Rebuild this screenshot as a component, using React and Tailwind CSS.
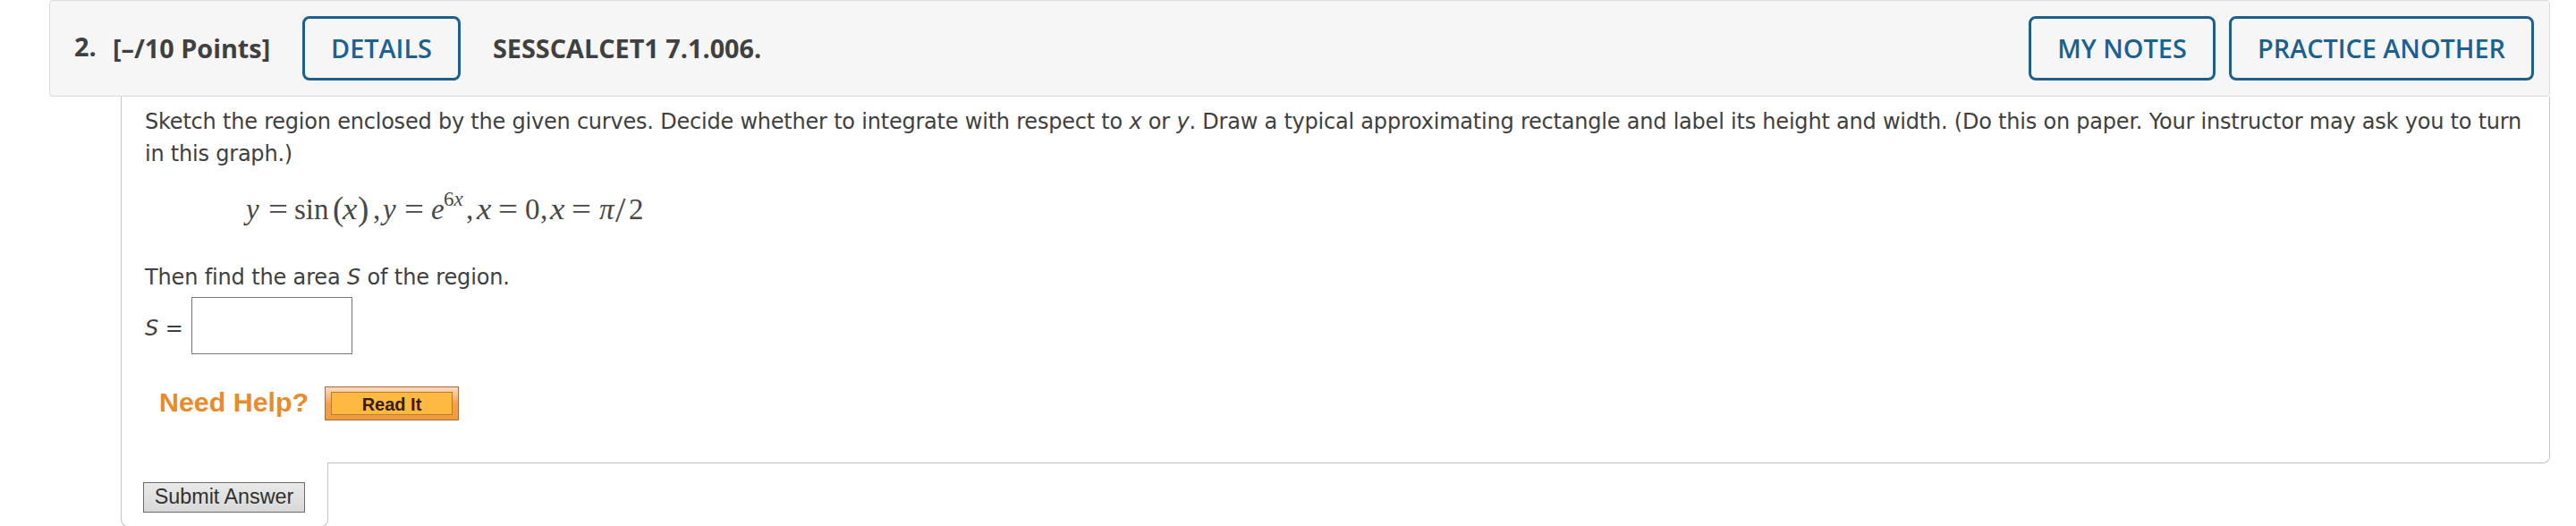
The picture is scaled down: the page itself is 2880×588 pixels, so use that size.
const headerButton =
  "h-[72px] shrink-0 rounded-[8px] border-[3px] border-[#1f5f8b] text-center text-[28.8px] font-semibold leading-[66px] text-[#1a6192]";

function Piece({ className, children }) {
  return <span className={`shrink-0 whitespace-nowrap ${className}`}>{children}</span>;
}

function Equals({ className }) {
  return (
    <Piece className={className}>
      <span className="inline-block origin-left scale-x-[1.18]">=</span>
    </Piece>
  );
}

function VarX({ className }) {
  return (
    <Piece className={className}>
      <span className="inline-block origin-left scale-x-[1.12] italic">x</span>
    </Piece>
  );
}

function Formula() {
  return (
    <div className="flex h-[44px] pl-[139px] font-['Liberation_Serif',serif] text-[33px] leading-[44px] text-[#484848]">
      <Piece className="w-[25px] italic">y</Piece>
      <Equals className="w-[29px]" />
      <Piece className="w-[43px]">sin</Piece>
      <Piece className="w-[11px] text-[37px]">(</Piece>
      <VarX className="w-[17px]" />
      <Piece className="w-[17px] text-[37px]">)</Piece>
      <Piece className="w-[11px]">,</Piece>
      <Piece className="w-[24px] italic">y</Piece>
      <Equals className="w-[30px]" />
      <Piece className="w-[14px] italic">e</Piece>
      <Piece className="relative -top-[11px] w-[25px] text-[23px]">
        6<i>x</i>
      </Piece>
      <Piece className="w-[12px]">,</Piece>
      <VarX className="w-[24px]" />
      <Equals className="w-[30px]" />
      <Piece className="w-[17px]">0</Piece>
      <Piece className="w-[11px]">,</Piece>
      <VarX className="w-[24px]" />
      <Equals className="w-[31px]" />
      <Piece className="w-[18px] italic">π</Piece>
      <Piece className="w-[15px] text-[41px]">/</Piece>
      <Piece className="w-[16px]">2</Piece>
    </div>
  );
}

export default function App() {
  return (
    <div className="h-[588px] w-[2880px] overflow-hidden bg-white pl-[55px] font-['DejaVu_Sans',sans-serif] text-[24px] text-[#404040]">
      <header className="flex h-[108px] w-[2796px] items-center rounded-[4px] border border-[#dcdcdc] bg-[#f6f6f6] pl-[27px] pr-[17px] font-['Open_Sans',sans-serif] text-[28.8px] font-bold">
        <span className="w-[43px] shrink-0 pb-[4px]">2.</span>
        <span className="w-[212px] shrink-0 whitespace-nowrap">[–/10 Points]</span>
        <button className={`${headerButton} w-[177px]`}>DETAILS</button>
        <span className="ml-[36px] grow">SESSCALCET1 7.1.006.</span>
        <button className={`${headerButton} mr-[15px] w-[209px]`}>MY NOTES</button>
        <button className={`${headerButton} w-[341px]`}>PRACTICE ANOTHER</button>
      </header>

      <main className="ml-[80px] flex h-[410px] w-[2716px] flex-col rounded-br-[8px] border-b border-l border-r border-[#c4c4c4] pl-[26px]">
        <p className="mt-[10px] whitespace-nowrap leading-[36px] tracking-[-0.215px]">
          Sketch the region enclosed by the given curves. Decide whether to integrate with respect to <i>x</i> or <i>y</i>. Draw a typical approximating rectangle and label its height and width. (Do this on paper. Your instructor may ask you to turn
          <br />
          in this graph.)
        </p>
        <div className="mt-[22px] -ml-[26px]">
          <Formula />
        </div>
        <p className="mt-[36px] leading-[36px] tracking-[-0.15px]">
          Then find the area <i>S</i> of the region.
        </p>
        <label className="mt-[4px] flex h-[64px] items-center">
          <span className="w-[52px] shrink-0 pt-[5px]">
            <i>S</i> =
          </span>
          <input className="h-[64px] w-[180px] border border-[#767676] bg-white outline-none" />
        </label>
        <div className="mt-[36px] flex h-[38px] items-center font-['Liberation_Sans',sans-serif] font-bold">
          <span className="ml-[16px] w-[185px] shrink-0 whitespace-nowrap pb-[2px] text-[30.4px] text-[#e98a2b]">Need Help?</span>
          <button className="h-[38px] w-[150px] border border-[#a8693a] bg-linear-to-b from-[#ffdcc0] via-[#f5a04a] to-[#f29a3c] px-[6px] py-[5px]">
            <span className="block h-[26px] border border-[#b87a2c] bg-[#fdb940] text-center text-[20px] leading-[26px] text-[#33200a]">
              Read It
            </span>
          </button>
        </div>
      </main>

      <footer className="relative -mt-px ml-[80px] h-[72px] w-[232px] rounded-b-[8px] border-b border-l border-r border-[#c4c4c4] bg-white pl-[24px] pt-[22px]">
        <button className="block h-[34px] w-[181px] border border-[#6b6b6b] bg-linear-to-b from-[#e9e9e9] to-[#d8d8d8] pb-[2px] font-['Liberation_Sans',sans-serif] text-[23.3px] leading-[30px] text-[#303030]">
          Submit Answer
        </button>
      </footer>
    </div>
  );
}
